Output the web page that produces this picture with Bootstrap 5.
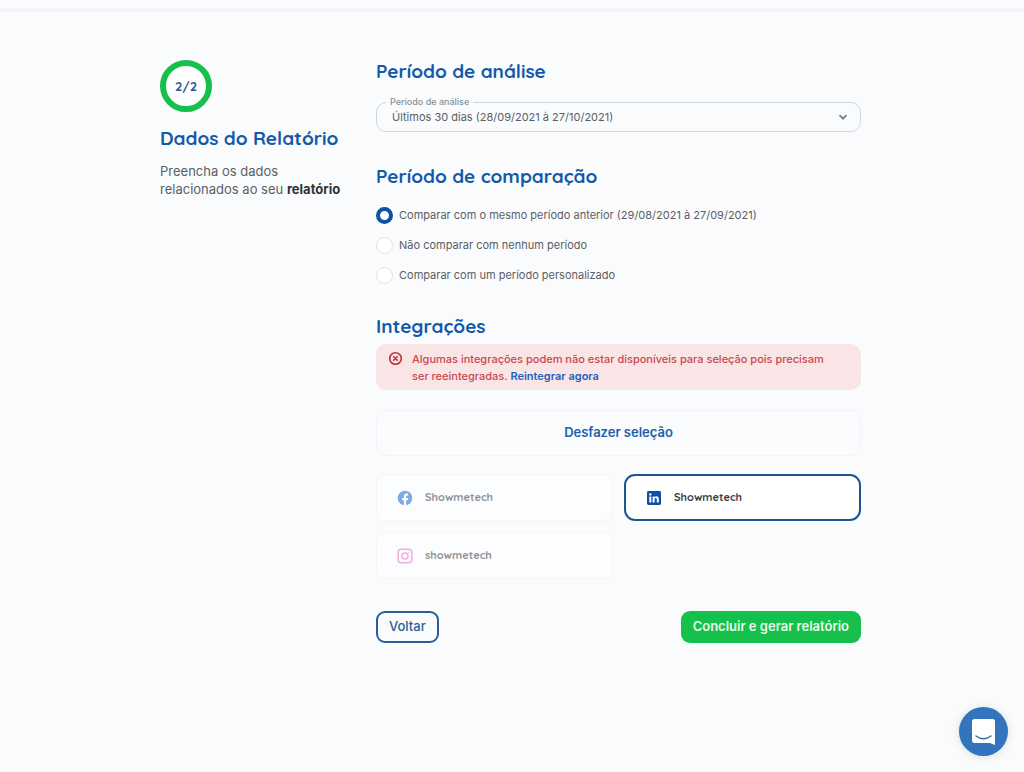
<!DOCTYPE html>
<html lang="pt-BR">
<head>
<meta charset="utf-8">
<meta name="viewport" content="width=device-width, initial-scale=1">
<title>Dados do Relatório</title>
<link href="https://cdn.jsdelivr.net/npm/bootstrap@5.3.0/dist/css/bootstrap.min.css" rel="stylesheet">
<style>
  :root { --brand: #1259a8; --go: #15c04b; --page: #f9fbfd; --ink: #5b5e65; }
  body { background: var(--page); color: var(--ink); font-family: Inter, "Liberation Sans", sans-serif; font-size: 11px; line-height: 18px; }
  .top-strip { height: 12px; border-bottom: 4px solid #f4f5f8; }
  .wizard { max-width: 704px; padding: 47px 3px 40px 0; gap: 32px; }
  .wizard-side { flex: 0 0 184px; font-size: 13px; }
  .wizard-side strong { color: #303338; font-weight: 700; }
  .display-face { font-family: Quicksand, Lato, sans-serif; }
  .step-title { color: var(--brand); font-size: 19px; line-height: 24px; font-weight: 700; }
  .step-ring { width: 52px; height: 52px; margin: 1px 0 14px; border: 6px solid var(--go); background: #fff; color: #285a9b; font-size: 13px; font-weight: 700; }
  .field-box { margin: 19px 0 32px; }
  .field-box label { left: 10px; top: -6px; padding: 0 4px; background: var(--page); color: #8b909a; font-size: 9px; line-height: 12px; font-weight: 500; }
  .field-box select { height: 30px; padding: 0 32px 0 15px; border: 1px solid #d3d7dc; border-radius: 10px; background-color: transparent; color: var(--ink); font-size: 11px; line-height: 18px; background-size: 10px 10px; background-position: right 12px center;
    background-image: url("data:image/svg+xml,%3Csvg xmlns='http://www.w3.org/2000/svg' viewBox='0 0 10 10'%3E%3Cpath d='M1.5 3.2 5 6.7l3.5-3.5' fill='none' stroke='%23777b80' stroke-width='1.7'/%3E%3C/svg%3E"); }
  .choices { margin: 12px 0 24px; }
  .choice { height: 30px; gap: 6px; }
  .choice .form-check-input { width: 17px; height: 17px; border: 1px solid #dfe2e6; background-color: #fff; }
  .choice .form-check-input:checked { border: 4px solid #0f51a5; background-image: none; }
  .notice { margin: 6px 0 20px; padding: 7px 24px 5px 12px; gap: 9px; border-radius: 10px; background: #fae5e6; color: #c74850; line-height: 17px; font-weight: 500; }
  .notice a { color: #2562b8; font-weight: 600; }
  .undo { height: 46px; border: 1px solid #f2f4f7; border-radius: 10px; color: #1b61aa; background: #fafcfd; font-size: 13px; font-weight: 600; }
  .accounts { display: grid; grid-template-columns: 1fr 1fr; gap: 11px; margin: 18px 0 32px; }
  .account { height: 47px; padding: 0 20px; gap: 12px; border: 1px solid #f4f6f8; border-radius: 8px; background: #fcfdfe; color: #909297; font-size: 11px; font-weight: 700; }
  .account.chosen { border: 2px solid #1c5594; border-radius: 11px; background: #fff; color: #3b3e45; }
  .act { height: 32px; padding: 0 11px; border-radius: 9px; font-size: 13px; }
  .act-back { border: 2px solid #295f99; color: #286099; font-weight: 500; }
  .act-go { background: var(--go); color: #e6fbe9; font-weight: 600; border: 0; padding: 0 12px; }
  .chat { right: 16px; bottom: 16px; width: 49px; height: 49px; background: #3275bd; box-shadow: 0 1px 10px rgba(0,0,0,.12); }
  @media (max-width: 767px) { .wizard { padding-left: 16px; padding-right: 16px; } .wizard-side { flex-basis: auto; } }
</style>
</head>
<body>
<header class="top-strip"></header>
<main class="wizard mx-auto d-flex flex-column flex-md-row">
  <aside class="wizard-side">
    <div class="step-ring display-face rounded-circle d-flex align-items-center justify-content-center">2/2</div>
    <h1 class="step-title display-face text-nowrap">Dados do Relatório</h1>
    <p class="mb-0 mt-2 pt-1">Preencha os dados<br>relacionados ao seu <strong>relatório</strong></p>
  </aside>

  <form class="flex-grow-1">
    <h2 class="step-title display-face mb-0">Período de análise</h2>
    <div class="field-box position-relative">
      <select id="period" class="form-select"><option>Últimos 30 dias (28/09/2021 à 27/10/2021)</option></select>
      <label for="period" class="position-absolute">Período de análise</label>
    </div>

    <h2 class="step-title display-face mb-0">Período de comparação</h2>
    <div class="choices">
      <div class="choice d-flex align-items-center">
        <input class="form-check-input m-0" type="radio" name="compare" id="c1" checked>
        <label for="c1">Comparar com o mesmo período anterior (29/08/2021 à 27/09/2021)</label>
      </div>
      <div class="choice d-flex align-items-center">
        <input class="form-check-input m-0" type="radio" name="compare" id="c2">
        <label for="c2">Não comparar com nenhum período</label>
      </div>
      <div class="choice d-flex align-items-center">
        <input class="form-check-input m-0" type="radio" name="compare" id="c3">
        <label for="c3">Comparar com um período personalizado</label>
      </div>
    </div>

    <h2 class="step-title display-face mb-0">Integrações</h2>
    <div class="notice d-flex" role="alert">
      <svg class="flex-shrink-0" width="15" height="15" viewBox="0 0 15 15" fill="none" stroke="#bd2f3d" stroke-width="1.6" stroke-linecap="round" aria-hidden="true"><circle cx="7.5" cy="7.5" r="5.8"/><path d="m5.7 5.7 3.6 3.6m0-3.6L5.7 9.3"/></svg>
      <div>Algumas integrações podem não estar disponíveis para seleção pois precisam ser reeintegradas. <a href="#" class="text-decoration-none d-inline-block">Reintegrar agora</a></div>
    </div>
    <button type="button" class="undo btn w-100 p-0">Desfazer seleção</button>

    <div class="accounts">
      <button type="button" class="account btn display-face d-flex align-items-center">
        <svg width="16" height="16" viewBox="0 0 16 16" aria-hidden="true"><circle cx="8" cy="8" r="7.3" fill="#80aae3"/><path d="M6.9 15.2v-5H5.1V8h1.8V6.5c0-1.9 1.1-2.9 2.8-2.9.6 0 1.2.1 1.5.1v1.9h-.9c-.9 0-1.2.5-1.2 1.1V8h2l-.3 2.2H9.1v5z" fill="#fff"/></svg>
        Showmetech
      </button>
      <button type="button" class="account chosen btn display-face d-flex align-items-center">
        <svg width="16" height="16" viewBox="0 0 16 16" aria-hidden="true"><rect x="1" y="1" width="14" height="14" rx="1.4" fill="#0d50a8"/><g fill="#fff"><circle cx="4.3" cy="4.4" r="1.2"/><path d="M3.3 6.4h2v6.2h-2zM6.6 6.4h1.9v.9c.4-.7 1.1-1 1.9-1 1.8 0 2.4 1.1 2.4 2.9v3.4h-2V9.5c0-.8-.2-1.5-1-1.5-.9 0-1.2.7-1.2 1.6v3h-2z"/></g></svg>
        Showmetech
      </button>
      <button type="button" class="account btn display-face d-flex align-items-center">
        <svg width="16" height="16" viewBox="0 0 16 16" fill="none" stroke="#efafdc" stroke-width="1.5" aria-hidden="true"><rect x="1.2" y="1.2" width="13.6" height="13.6" rx="3"/><circle cx="8" cy="8" r="3"/><circle cx="11.8" cy="4.2" r=".8" fill="#efafdc" stroke="none"/></svg>
        showmetech
      </button>
    </div>

    <div class="d-flex justify-content-between">
      <button type="button" class="act act-back btn">Voltar</button>
      <button type="submit" class="act act-go btn">Concluir e gerar relatório</button>
    </div>
  </form>
</main>
<button type="button" class="chat btn rounded-circle position-fixed p-0 border-0 d-flex align-items-center justify-content-center" aria-label="Abrir chat">
  <svg width="25" height="28" viewBox="0 0 25 28" aria-hidden="true"><path d="M3.500 1h18Q24 1 24 3.500V27l-5-2H3.500Q1 25 1 22.500v-19Q1 1 3.500 1z" fill="#fff"/><path d="M5 18q7.500 5.500 15 0" fill="none" stroke="#3b6b9b" stroke-width="1.500" stroke-linecap="round"/></svg>
</button>
<script src="https://cdn.jsdelivr.net/npm/bootstrap@5.3.0/dist/js/bootstrap.bundle.min.js"></script>
</body>
</html>
